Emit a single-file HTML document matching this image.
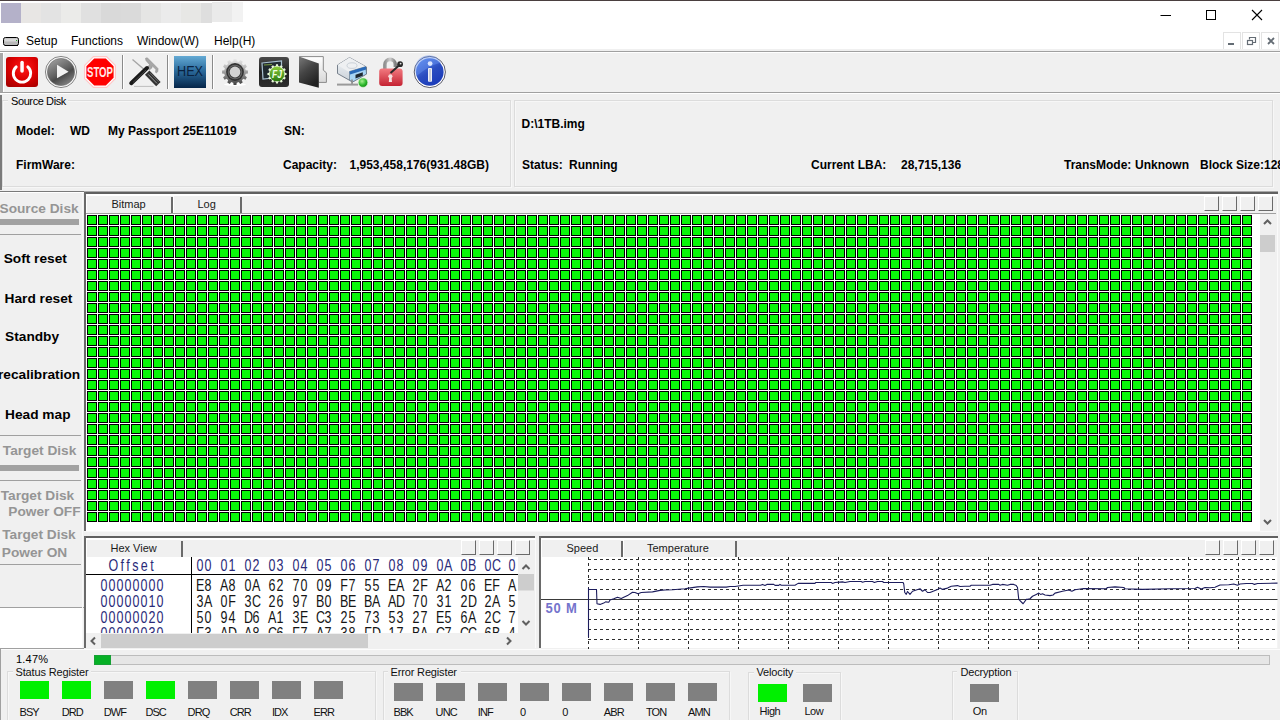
<!DOCTYPE html>
<html><head><meta charset="utf-8">
<style>
*{margin:0;padding:0;box-sizing:border-box}
html,body{width:1280px;height:720px;overflow:hidden;background:#f0f0f0;font-family:"Liberation Sans",sans-serif;color:#000}
.a{position:absolute}
.t{position:absolute;white-space:nowrap;line-height:1}
.b{font-weight:bold}
.lb{font-size:11px;letter-spacing:-0.5px;color:#111}
.hx{position:absolute;font:12.5px "Liberation Sans",sans-serif;line-height:1;white-space:nowrap;transform:scaleY(1.3);transform-origin:0 0;color:#2a2a78}
.hx span{display:inline-block;width:8px;height:13px;text-align:center;vertical-align:top}
</style></head><body>
<!-- title bar -->
<div class="a" style="left:0;top:0;width:1280px;height:51px;background:#fff"></div>
<div class="a" style="left:0;top:0;width:1280px;height:1px;background:#4a3f3f"></div>
<div class="a" style="left:1px;top:3px;width:20px;height:20px;background:#b4b1c9"></div><div class="a" style="left:21px;top:3px;width:20px;height:20px;background:#e8e6e4"></div><div class="a" style="left:41px;top:3px;width:20px;height:20px;background:#e3e3e3"></div><div class="a" style="left:61px;top:3px;width:20px;height:20px;background:#ebebe9"></div><div class="a" style="left:81px;top:3px;width:20px;height:20px;background:#e0e0e0"></div><div class="a" style="left:101px;top:3px;width:20px;height:20px;background:#d9d9d9"></div><div class="a" style="left:121px;top:3px;width:20px;height:20px;background:#dadada"></div><div class="a" style="left:141px;top:3px;width:20px;height:20px;background:#e5e5e4"></div><div class="a" style="left:161px;top:3px;width:20px;height:20px;background:#ebebeb"></div><div class="a" style="left:181px;top:3px;width:20px;height:20px;background:#e7e7e5"></div><div class="a" style="left:201px;top:3px;width:11px;height:20px;background:#dedede"></div><div class="a" style="left:212px;top:2px;width:20px;height:20px;background:#eaeaea"></div><div class="a" style="left:232px;top:2px;width:11px;height:20px;background:#f2f2f2"></div>

<!-- window controls -->
<svg class="a" style="left:1150px;top:0" width="130" height="30">
<line x1="10.5" y1="15.5" x2="21" y2="15.5" stroke="#000" stroke-width="1"/>
<rect x="56.5" y="10.5" width="9" height="9" fill="none" stroke="#000" stroke-width="1"/>
<path d="M102 10 L112 20 M112 10 L102 20" stroke="#000" stroke-width="1.1"/>
</svg>
<!-- menu -->
<svg class="a" style="left:3px;top:37px" width="17" height="10">
<rect x="0.5" y="0.5" width="15" height="8" rx="2" fill="#b8b8b8" stroke="#000" stroke-width="1"/>
<rect x="1.5" y="1.5" width="13" height="3" fill="#d8d8d8"/>
<line x1="2" y1="8.5" x2="15" y2="8.5" stroke="#000"/>
<rect x="13" y="3" width="1" height="1" fill="#3a3"/>
</svg>
<div class="t" style="left:26px;top:35px;font-size:12px">Setup</div>
<div class="t" style="left:71px;top:35px;font-size:12px">Functions</div>
<div class="t" style="left:137px;top:35px;font-size:12px">Window(W)</div>
<div class="t" style="left:214px;top:35px;font-size:12px">Help(H)</div>
<div class="a" style="left:1223px;top:32px;width:18px;height:18px;border:1px solid #e3e3e3"></div>
<div class="a" style="left:1242px;top:32px;width:18px;height:18px;border:1px solid #e3e3e3"></div>
<div class="a" style="left:1261px;top:32px;width:18px;height:18px;border:1px solid #e3e3e3"></div>
<svg class="a" style="left:1223px;top:32px" width="57" height="18">
<rect x="5" y="11" width="6" height="2" fill="#646c74"/>
<rect x="24.5" y="8.5" width="5" height="4" fill="none" stroke="#646c74" stroke-width="1.2"/>
<path d="M26.5 7.5 V5.5 H32.5 V10.5 H30" fill="none" stroke="#646c74" stroke-width="1.2"/>
<path d="M45 6 L51 12 M51 6 L45 12" stroke="#646c74" stroke-width="1.8"/>
</svg>
<div class="a" style="left:0;top:49px;width:1280px;height:2px;background:#f0f0f0"></div>
<div class="a" style="left:0;top:51px;width:1280px;height:1px;background:#a0a0a0"></div>
<div class="a" style="left:0;top:52px;width:1280px;height:1px;background:#fff"></div>

<!-- toolbar -->
<div class="a" style="left:0;top:53px;width:3px;height:39px;background:#a8a8a8"></div>
<div class="a" style="left:3px;top:53px;width:1px;height:39px;background:#fff"></div>
<svg class="a" style="left:0;top:52px" width="460" height="40">
<defs>
<radialGradient id="gPow" cx="0.55" cy="0.35" r="0.75"><stop offset="0" stop-color="#ff1a1a"/><stop offset="0.55" stop-color="#dc0000"/><stop offset="1" stop-color="#a80000"/></radialGradient>
<linearGradient id="gPlay" x1="0.2" y1="0" x2="0.8" y2="1"><stop offset="0" stop-color="#a0a0a0"/><stop offset="0.5" stop-color="#606060"/><stop offset="0.62" stop-color="#4a4a4a"/><stop offset="1" stop-color="#8a8a8a"/></linearGradient>
<linearGradient id="gHex" x1="0" y1="0" x2="0" y2="1"><stop offset="0" stop-color="#64aad4"/><stop offset="0.45" stop-color="#2c6c9e"/><stop offset="1" stop-color="#052549"/></linearGradient>
<linearGradient id="gDark" x1="0" y1="0" x2="0" y2="1"><stop offset="0" stop-color="#4a4a4a"/><stop offset="0.5" stop-color="#202020"/><stop offset="1" stop-color="#2e2e2e"/></linearGradient>
<linearGradient id="gFold" x1="0" y1="0" x2="0.5" y2="1"><stop offset="0" stop-color="#7a7a7a"/><stop offset="0.5" stop-color="#454545"/><stop offset="1" stop-color="#222"/></linearGradient>
<linearGradient id="gPage" x1="0" y1="0" x2="0" y2="1"><stop offset="0" stop-color="#ffffff"/><stop offset="1" stop-color="#d8d8d8"/></linearGradient>
<linearGradient id="gLock" x1="0" y1="0" x2="0" y2="1"><stop offset="0" stop-color="#f27a80"/><stop offset="1" stop-color="#c42232"/></linearGradient>
<linearGradient id="gShk" x1="0" y1="0" x2="1" y2="0"><stop offset="0" stop-color="#909090"/><stop offset="0.5" stop-color="#d0d0d0"/><stop offset="1" stop-color="#808080"/></linearGradient>
<linearGradient id="gInfo" x1="0.2" y1="0" x2="0.8" y2="1"><stop offset="0" stop-color="#5a88ec"/><stop offset="0.5" stop-color="#2a4cc0"/><stop offset="1" stop-color="#1838b8"/></linearGradient>
<linearGradient id="gGearT" x1="0" y1="0" x2="0" y2="1"><stop offset="0" stop-color="#e8e8e8"/><stop offset="0.45" stop-color="#a8a8a8"/><stop offset="1" stop-color="#404040"/></linearGradient>
<linearGradient id="gGreen" x1="0" y1="0" x2="0" y2="1"><stop offset="0" stop-color="#8ccc3a"/><stop offset="1" stop-color="#2a7a10"/></linearGradient>
<linearGradient id="gDrv" x1="0" y1="0" x2="0" y2="1"><stop offset="0" stop-color="#f4f6f8"/><stop offset="1" stop-color="#c8d0d8"/></linearGradient>
<radialGradient id="gBall" cx="0.4" cy="0.35" r="0.7"><stop offset="0" stop-color="#a8f090"/><stop offset="0.6" stop-color="#2cb82c"/><stop offset="1" stop-color="#108010"/></radialGradient>
</defs>
<!-- power -->
<rect x="6" y="5" width="32" height="30" rx="3" fill="url(#gPow)"/>
<path d="M16.2 14.9 A8.7 8.7 0 1 0 27.8 14.9" fill="none" stroke="#fff" stroke-width="2.9" stroke-linecap="round"/>
<rect x="20.3" y="8.7" width="3.5" height="12" rx="1.75" fill="#fff"/>
<!-- play -->
<circle cx="61" cy="20" r="15.6" fill="#f4f4f4" stroke="#7a7a7a" stroke-width="0.9"/>
<circle cx="61" cy="20" r="13.6" fill="url(#gPlay)" stroke="#6a6a6a" stroke-width="0.6"/>
<path d="M57 12.8 L68.6 19.8 L57 26.2 Z" fill="#f2f2f2"/>
<!-- stop -->
<path d="M93.2 4 L106.8 4 L116 13.2 L116 26.8 L106.8 36 L93.2 36 L84 26.8 L84 13.2 Z" fill="#ffc8c8"/>
<path d="M93.7 5.2 L106.3 5.2 L114.8 13.7 L114.8 26.3 L106.3 34.8 L93.7 34.8 L85.2 26.3 L85.2 13.7 Z" fill="#fff"/>
<path d="M94.2 6.4 L105.8 6.4 L113.6 14.2 L113.6 25.8 L105.8 33.6 L94.2 33.6 L86.4 25.8 L86.4 14.2 Z" fill="#ff0000"/>
<text x="100" y="25.4" text-anchor="middle" font-family="Liberation Sans" font-weight="bold" font-size="15.5" fill="#ffe8e8" textLength="26" lengthAdjust="spacingAndGlyphs">STOP</text>
<!-- sep -->
<rect x="122" y="3" width="1" height="34" fill="#8a8a8a"/><rect x="123" y="3" width="1" height="34" fill="#fff"/>
<!-- tools -->
<path d="M134 34.4 H153.5" stroke="#bdbdbd" stroke-width="1"/>
<path d="M132.5 7.5 L144.2 17.6" stroke="#a4a4a4" stroke-width="1.3"/>
<path d="M145.5 6.3 L147.3 5.8 L158 16.6 L157.8 19.6 L156.3 21 L155.5 20 L156 17.5 L152.2 13.8 L152 15.8 L149.5 17.8 L147.5 15.8 L149.5 12.5 L146 8.5 Z" fill="#a8a8a8" stroke="#8e8e8e" stroke-width="0.6"/>
<path d="M147.2 20.6 L158.4 32.2" stroke="#333" stroke-width="6.2"/>
<path d="M148.2 22.4 L157 31.4" stroke="#9a9a9a" stroke-width="1"/>
<path d="M150.2 21.2 L158.6 29.8" stroke="#6a6a6a" stroke-width="0.9"/>
<path d="M131.2 31.2 L147 16" stroke="#1a1a1a" stroke-width="4" stroke-linecap="round"/>
<path d="M133 30.4 L146 18" stroke="#4a4a4a" stroke-width="0.9"/>
<!-- sep -->
<rect x="167" y="3" width="1" height="34" fill="#8a8a8a"/><rect x="168" y="3" width="1" height="34" fill="#fff"/>
<!-- hex -->
<rect x="174" y="4" width="32" height="32" fill="url(#gHex)"/>
<text x="190" y="23.8" text-anchor="middle" font-family="Liberation Sans" font-size="14" fill="#0a2240" textLength="26" lengthAdjust="spacingAndGlyphs">HEX</text>
<!-- sep -->
<rect x="212" y="3" width="1" height="34" fill="#8a8a8a"/><rect x="213" y="3" width="1" height="34" fill="#fff"/>
<!-- gear -->
<ellipse cx="235" cy="32.5" rx="11" ry="1.5" fill="#fff"/>
<path d="M233.25 9.34 L233.57 7.08 L236.43 7.08 L236.75 9.34 L238.82 9.90 L240.23 8.10 L242.70 9.52 L241.84 11.64 L243.36 13.16 L245.48 12.30 L246.90 14.77 L245.10 16.18 L245.66 18.25 L247.92 18.57 L247.92 21.43 L245.66 21.75 L245.10 23.82 L246.90 25.23 L245.48 27.70 L243.36 26.84 L241.84 28.36 L242.70 30.48 L240.23 31.90 L238.82 30.10 L236.75 30.66 L236.43 32.92 L233.57 32.92 L233.25 30.66 L231.18 30.10 L229.77 31.90 L227.30 30.48 L228.16 28.36 L226.64 26.84 L224.52 27.70 L223.10 25.23 L224.90 23.82 L224.34 21.75 L222.08 21.43 L222.08 18.57 L224.34 18.25 L224.90 16.18 L223.10 14.77 L224.52 12.30 L226.64 13.16 L228.16 11.64 L227.30 9.52 L229.77 8.10 L231.18 9.90 Z" fill="url(#gGearT)"/>
<circle cx="235" cy="20" r="8.9" fill="#333"/>
<circle cx="235" cy="20" r="7.3" fill="#6a6a6a"/>
<circle cx="235" cy="20" r="6.3" fill="#3e3e3e"/>
<circle cx="235" cy="20" r="5.4" fill="#d2d2d2"/>
<!-- dark window -->
<rect x="259" y="5" width="30" height="30" rx="3" fill="url(#gDark)"/>
<path d="M262 11 L281.5 9 L281.5 25 L263 27 Z" fill="#202a30" stroke="#a8c0d0" stroke-width="1.2"/>
<path d="M264 13 L272 12.5" stroke="#7a9a40" stroke-width="1"/>
<path d="M275.75 14.00 L276.00 12.35 L278.00 12.35 L278.25 14.00 L279.87 14.43 L280.90 13.13 L282.64 14.13 L282.03 15.68 L283.22 16.87 L284.77 16.26 L285.77 18.00 L284.47 19.03 L284.90 20.65 L286.55 20.90 L286.55 22.90 L284.90 23.15 L284.47 24.77 L285.77 25.80 L284.77 27.54 L283.22 26.93 L282.03 28.12 L282.64 29.67 L280.90 30.67 L279.87 29.37 L278.25 29.80 L278.00 31.45 L276.00 31.45 L275.75 29.80 L274.13 29.37 L273.10 30.67 L271.36 29.67 L271.97 28.12 L270.78 26.93 L269.23 27.54 L268.23 25.80 L269.53 24.77 L269.10 23.15 L267.45 22.90 L267.45 20.90 L269.10 20.65 L269.53 19.03 L268.23 18.00 L269.23 16.26 L270.78 16.87 L271.97 15.68 L271.36 14.13 L273.10 13.13 L274.13 14.43 Z" fill="#e8f8d8"/>
<circle cx="277" cy="21.9" r="7.4" fill="url(#gGreen)"/>
<text x="277" y="26.2" text-anchor="middle" font-family="Liberation Sans" font-weight="bold" font-style="italic" font-size="11" fill="#f0ffe0" textLength="10" lengthAdjust="spacingAndGlyphs">FJ</text>
<!-- folder -->
<path d="M299.5 4.6 L323.3 4.6 L323.3 18.2 L326.4 20.8 L326.4 30.4 L318.8 30.4 Z" fill="url(#gPage)" stroke="#8a8a8a" stroke-width="1"/>
<path d="M299 4.6 L318.8 11.4 L318.8 35.8 L299 30.6 Z" fill="url(#gFold)"/>
<!-- drive -->
<path d="M337.5 13 L349.5 5.6 L366.5 15 L366.5 22 L352.5 30 L337.5 21.5 Z" fill="url(#gDrv)" stroke="#6a7480" stroke-width="0.9"/>
<path d="M337.5 13 L349.5 5.6 L366.5 15 L353 22.5 Z" fill="#eef0f2"/>
<ellipse cx="352" cy="13.6" rx="5" ry="2.8" fill="none" stroke="#c0c8d0" stroke-width="0.8"/>
<path d="M349.5 19.5 L365.8 14.6 L366.5 22 L352.5 30 L349.5 28 Z" fill="#a8d4f4" stroke="#5a6a7a" stroke-width="0.6"/>
<path d="M349.5 19.5 L365.8 14.6 L366.2 17.5 L350 22.5 Z" fill="#2a6ab8"/>
<path d="M355.5 22.8 L362.8 20.2 L362.8 23.8 L355.5 26.4 Z" fill="#202830"/>
<path d="M352 27.5 V32.5" stroke="#8a8a8a" stroke-width="1.6"/>
<path d="M337 32.6 H358" stroke="#9a9a9a" stroke-width="2"/>
<circle cx="363" cy="30.6" r="4.7" fill="url(#gBall)" stroke="#d8f4d0" stroke-width="0.6"/>
<!-- lock -->
<path d="M384.9 17 V12.6 A5.2 5.2 0 0 1 395.3 12.6 V15" fill="none" stroke="url(#gShk)" stroke-width="3.6"/>
<rect x="379.2" y="16.6" width="23.4" height="17.4" rx="3" fill="url(#gLock)"/>
<circle cx="390.4" cy="24.3" r="2.1" fill="#f8e0e0"/>
<path d="M389.3 24.5 L391.5 24.5 L392 30 L388.8 30 Z" fill="#f8e0e0"/>
<path d="M390.5 21 L399.5 13" stroke="#2a2a2a" stroke-width="2"/>
<circle cx="400.1" cy="12.2" r="2.9" fill="#2a2a2a"/>
<circle cx="400.6" cy="11.6" r="0.9" fill="#e0e0e0"/>
<!-- info -->
<circle cx="429.8" cy="20" r="15.6" fill="#fff" stroke="#4a4a5a" stroke-width="0.9"/>
<circle cx="429.8" cy="20" r="13.8" fill="url(#gInfo)"/>
<path d="M416.6 24 A13.8 13.8 0 0 1 441 10.5 Q428 14 416.6 24 Z" fill="#6a94f0" opacity="0.45"/>
<circle cx="430.1" cy="11.6" r="2.4" fill="#dce6ff"/>
<rect x="428" y="16" width="4" height="13.8" rx="0.8" fill="#eef0f8"/>
<rect x="429.4" y="17" width="1.2" height="12" fill="#b0b4c0"/>
</svg>
<div class="a" style="left:0;top:92px;width:1280px;height:1px;background:#a0a0a0"></div>

<!-- source disk panel -->
<div class="a" style="left:0;top:93px;width:1280px;height:1px;background:#fff"></div>
<div class="a" style="left:0;top:95px;width:2px;height:95px;background:#7a7a7a"></div>
<div class="a" style="left:2px;top:100px;width:509px;height:87px;border:1px solid #dcdcdc;box-shadow:inset 1px 1px #f7f7f7,1px 1px #f7f7f7"></div>
<div class="a" style="left:8px;top:96px;width:60px;height:8px;background:#f0f0f0"></div>
<div class="t" style="left:11px;top:95.5px;font-size:11px;letter-spacing:-0.4px">Source Disk</div>
<div class="a" style="left:514px;top:100px;width:759px;height:87px;border:1px solid #dcdcdc;box-shadow:inset 1px 1px #f7f7f7,1px 1px #f7f7f7"></div>
<div class="t b" style="left:16px;top:124.5px;font-size:12px">Model:</div>
<div class="t b" style="left:70px;top:124.5px;font-size:12px">WD</div>
<div class="t b" style="left:108px;top:124.5px;font-size:12px">My Passport 25E11019</div>
<div class="t b" style="left:284px;top:124.5px;font-size:12px">SN:</div>
<div class="t b" style="left:16px;top:158.5px;font-size:12px">FirmWare:</div>
<div class="t b" style="left:283px;top:158.5px;font-size:12px">Capacity:</div>
<div class="t b" style="left:349.5px;top:158.5px;font-size:12px">1,953,458,176(931.48GB)</div>
<div class="t b" style="left:521.5px;top:118px;font-size:12px">D:\1TB.img</div>
<div class="t b" style="left:522px;top:158.5px;font-size:12px">Status:</div>
<div class="t b" style="left:569px;top:158.5px;font-size:12px">Running</div>
<div class="t b" style="left:811px;top:158.5px;font-size:12px">Current LBA:</div>
<div class="t b" style="left:901px;top:158.5px;font-size:12px">28,715,136</div>
<div class="t b" style="left:1064px;top:158.5px;font-size:12px">TransMode:</div>
<div class="t b" style="left:1135px;top:158.5px;font-size:12px">Unknown</div>
<div class="t b" style="left:1200px;top:158.5px;font-size:12px">Block Size:128</div>
<div class="a" style="left:0;top:191px;width:84px;height:1px;background:#7a7a7a"></div>
<div class="a" style="left:0;top:192px;width:84px;height:1px;background:#fff"></div>

<!-- sidebar -->
<div class="t b" style="left:-0.5px;top:201.8px;font-size:13.7px;color:#959595">Source Disk</div>
<div class="a" style="left:0;top:219px;width:79px;height:6px;background:#a2a2a2"></div>
<div class="a" style="left:0;top:234px;width:81px;height:1px;background:#a0a0a0"></div>
<div class="t b" style="left:3.7px;top:251.9px;font-size:13.7px">Soft reset</div>
<div class="t b" style="left:4.6px;top:292.1px;font-size:13.7px">Hard reset</div>
<div class="t b" style="left:5.1px;top:329.7px;font-size:13.7px">Standby</div>
<div class="t b" style="left:-2px;top:367.9px;font-size:13.7px">recalibration</div>
<div class="t b" style="left:5.1px;top:407.6px;font-size:13.7px">Head map</div>
<div class="a" style="left:0;top:435px;width:81px;height:1px;background:#a0a0a0"></div>
<div class="t b" style="left:2.8px;top:444.1px;font-size:13.7px;color:#959595">Target Disk</div>
<div class="t b" style="left:0.7px;top:489.1px;font-size:13.7px;color:#959595">Target Disk</div>
<div class="t b" style="left:8.3px;top:505.1px;font-size:13.7px;color:#959595">Power OFF</div>
<div class="t b" style="left:2.2px;top:528.1px;font-size:13.7px;color:#959595">Target Disk</div>
<div class="t b" style="left:1.8px;top:546.1px;font-size:13.7px;color:#959595">Power ON</div>
<div class="a" style="left:0;top:465px;width:79px;height:6px;background:#a2a2a2"></div>
<div class="a" style="left:0;top:480px;width:81px;height:1px;background:#a0a0a0"></div>
<div class="a" style="left:0;top:564px;width:81px;height:1px;background:#a0a0a0"></div>
<div class="a" style="left:0;top:607px;width:84px;height:1px;background:#a0a0a0"></div>
<div class="a" style="left:0;top:608px;width:83px;height:40px;background:#fff"></div>
<div class="a" style="left:0;top:648px;width:84px;height:1px;background:#a0a0a0"></div>

<!-- bitmap panel -->
<div class="a" style="left:84px;top:191px;width:1194px;height:1px;background:#a8a8a8"></div>
<div class="a" style="left:84px;top:192px;width:1194px;height:2px;background:#606060"></div>
<div class="a" style="left:84px;top:192px;width:2px;height:339px;background:#6a6a6a"></div>
<div class="a" style="left:86px;top:194px;width:1191px;height:2px;background:#fff"></div>
<div class="a" style="left:86px;top:214px;width:1174px;height:317px;background:#fff"></div>
<div class="a" style="left:86px;top:213px;width:1190px;height:1px;background:#a0a0a0"></div>
<div class="a" style="left:1277px;top:194px;width:1px;height:337px;background:#fafafa"></div>
<div class="a" style="left:86px;top:196px;width:1px;height:17px;background:#fff"></div>
<div class="a" style="left:171px;top:197px;width:2px;height:16px;background:#6a6a6a"></div>
<div class="a" style="left:173px;top:196px;width:1px;height:17px;background:#fff"></div>
<div class="a" style="left:240px;top:197px;width:2px;height:16px;background:#6a6a6a"></div>
<div class="t" style="left:111.5px;top:199.4px;font-size:11px;color:#1a1a1a">Bitmap</div>
<div class="t" style="left:197.5px;top:199.4px;font-size:11px;color:#1a1a1a">Log</div>
<div class="a" style="left:1204px;top:196px;width:15px;height:15px;border-top:1px solid #fff;border-left:1px solid #fff;border-right:1px solid #6a6a6a;border-bottom:1px solid #6a6a6a"></div>
<div class="a" style="left:1222px;top:196px;width:15px;height:15px;border-top:1px solid #fff;border-left:1px solid #fff;border-right:1px solid #6a6a6a;border-bottom:1px solid #6a6a6a"></div>
<div class="a" style="left:1240px;top:196px;width:15px;height:15px;border-top:1px solid #fff;border-left:1px solid #fff;border-right:1px solid #6a6a6a;border-bottom:1px solid #6a6a6a"></div>
<div class="a" style="left:1258px;top:196px;width:15px;height:15px;border-top:1px solid #fff;border-left:1px solid #fff;border-right:1px solid #6a6a6a;border-bottom:1px solid #6a6a6a"></div>
<svg class="a" style="left:87px;top:215px" width="1165" height="307">
<defs><pattern id="cell" width="11" height="11" patternUnits="userSpaceOnUse"><rect width="10" height="10" fill="#000"/><rect x="1" y="1" width="8" height="8" fill="#08f808"/></pattern></defs>
<rect width="1165" height="307" fill="url(#cell)"/>
</svg>
<div class="a" style="left:1260px;top:214px;width:15px;height:316px;background:#f0f0f0"></div>
<svg class="a" style="left:1260px;top:214px" width="15" height="316">
<path d="M4 10 L7.5 6.5 L11 10" fill="none" stroke="#606060" stroke-width="2"/>
<rect x="0" y="21" width="15" height="17" fill="#cdcdcd"/>
<path d="M4 306 L7.5 309.5 L11 306" fill="none" stroke="#606060" stroke-width="2"/>
</svg>

<!-- hex panel -->
<div class="a" style="left:82px;top:193px;width:1px;height:455px;background:#f8f8f8"></div>
<div class="a" style="left:84px;top:531px;width:1194px;height:1px;background:#f8f8f8"></div>
<div class="a" style="left:84px;top:536px;width:451px;height:2px;background:#606060"></div>
<div class="a" style="left:84px;top:536px;width:2px;height:112px;background:#6a6a6a"></div>
<div class="a" style="left:86px;top:538px;width:449px;height:2px;background:#fff"></div>
<div class="a" style="left:535px;top:538px;width:1px;height:110px;background:#fafafa"></div>
<div class="a" style="left:86px;top:540px;width:1px;height:17px;background:#fff"></div>
<div class="a" style="left:181px;top:541px;width:2px;height:16px;background:#6a6a6a"></div>
<div class="t" style="left:110.5px;top:543.4px;font-size:11px;color:#1a1a1a">Hex View</div>
<div class="a" style="left:461px;top:540px;width:15px;height:15px;border-top:1px solid #fff;border-left:1px solid #fff;border-right:1px solid #6a6a6a;border-bottom:1px solid #6a6a6a"></div>
<div class="a" style="left:479px;top:540px;width:15px;height:15px;border-top:1px solid #fff;border-left:1px solid #fff;border-right:1px solid #6a6a6a;border-bottom:1px solid #6a6a6a"></div>
<div class="a" style="left:497px;top:540px;width:15px;height:15px;border-top:1px solid #fff;border-left:1px solid #fff;border-right:1px solid #6a6a6a;border-bottom:1px solid #6a6a6a"></div>
<div class="a" style="left:515px;top:540px;width:15px;height:15px;border-top:1px solid #fff;border-left:1px solid #fff;border-right:1px solid #6a6a6a;border-bottom:1px solid #6a6a6a"></div>
<div class="a" style="left:86px;top:557px;width:432px;height:76px;background:#fff;overflow:hidden">
<div class="a" style="left:0;top:17px;width:432px;height:1px;background:#000"></div>
<div class="a" style="left:105px;top:0;width:1px;height:76px;background:#000"></div>
<div class="hx" style="left:22.5px;top:1px;letter-spacing:2.4px">Offset</div>
<div class="hx" style="left:110px;top:1px"><span>0</span><span>0</span><span></span><span>0</span><span>1</span><span></span><span>0</span><span>2</span><span></span><span>0</span><span>3</span><span></span><span>0</span><span>4</span><span></span><span>0</span><span>5</span><span></span><span>0</span><span>6</span><span></span><span>0</span><span>7</span><span></span><span>0</span><span>8</span><span></span><span>0</span><span>9</span><span></span><span>0</span><span>A</span><span></span><span>0</span><span>B</span><span></span><span>0</span><span>C</span><span></span><span>0</span></div>
<div class="hx" style="left:14px;top:21px"><span>0</span><span>0</span><span>0</span><span>0</span><span>0</span><span>0</span><span>0</span><span>0</span></div>
<div class="hx" style="left:14px;top:37px"><span>0</span><span>0</span><span>0</span><span>0</span><span>0</span><span>0</span><span>1</span><span>0</span></div>
<div class="hx" style="left:14px;top:53px"><span>0</span><span>0</span><span>0</span><span>0</span><span>0</span><span>0</span><span>2</span><span>0</span></div>
<div class="hx" style="left:14px;top:69px"><span>0</span><span>0</span><span>0</span><span>0</span><span>0</span><span>0</span><span>3</span><span>0</span></div>
<div class="hx" style="left:110px;top:21px;color:#151515"><span>E</span><span>8</span><span></span><span>A</span><span>8</span><span></span><span>0</span><span>A</span><span></span><span>6</span><span>2</span><span></span><span>7</span><span>0</span><span></span><span>0</span><span>9</span><span></span><span>F</span><span>7</span><span></span><span>5</span><span>5</span><span></span><span>E</span><span>A</span><span></span><span>2</span><span>F</span><span></span><span>A</span><span>2</span><span></span><span>0</span><span>6</span><span></span><span>E</span><span>F</span><span></span><span>A</span></div>
<div class="hx" style="left:110px;top:37px;color:#151515"><span>3</span><span>A</span><span></span><span>0</span><span>F</span><span></span><span>3</span><span>C</span><span></span><span>2</span><span>6</span><span></span><span>9</span><span>7</span><span></span><span>B</span><span>0</span><span></span><span>B</span><span>E</span><span></span><span>B</span><span>A</span><span></span><span>A</span><span>D</span><span></span><span>7</span><span>0</span><span></span><span>3</span><span>1</span><span></span><span>2</span><span>D</span><span></span><span>2</span><span>A</span><span></span><span>5</span></div>
<div class="hx" style="left:110px;top:53px;color:#151515"><span>5</span><span>0</span><span></span><span>9</span><span>4</span><span></span><span>D</span><span>6</span><span></span><span>A</span><span>1</span><span></span><span>3</span><span>E</span><span></span><span>C</span><span>3</span><span></span><span>2</span><span>5</span><span></span><span>7</span><span>3</span><span></span><span>5</span><span>3</span><span></span><span>2</span><span>7</span><span></span><span>E</span><span>5</span><span></span><span>6</span><span>A</span><span></span><span>2</span><span>C</span><span></span><span>7</span></div>
<div class="hx" style="left:110px;top:69px;color:#151515"><span>F</span><span>3</span><span></span><span>A</span><span>D</span><span></span><span>A</span><span>8</span><span></span><span>C</span><span>6</span><span></span><span>F</span><span>7</span><span></span><span>A</span><span>7</span><span></span><span>3</span><span>8</span><span></span><span>F</span><span>D</span><span></span><span>1</span><span>7</span><span></span><span>B</span><span>A</span><span></span><span>C</span><span>7</span><span></span><span>C</span><span>C</span><span></span><span>6</span><span>B</span><span></span><span>4</span></div>
</div>
<div class="a" style="left:518px;top:557px;width:17px;height:76px;background:#f0f0f0"></div>
<svg class="a" style="left:518px;top:557px" width="16" height="76">
<path d="M4.5 12 L8 8.5 L11.5 12" fill="none" stroke="#606060" stroke-width="2"/>
<rect x="0" y="17" width="16" height="16.5" fill="#cdcdcd"/>
<path d="M4.5 64 L8 67.5 L11.5 64" fill="none" stroke="#606060" stroke-width="2"/>
</svg>
<div class="a" style="left:86px;top:633px;width:449px;height:15px;background:#f0f0f0"></div>
<div class="a" style="left:101px;top:634px;width:267px;height:14px;background:#cdcdcd"></div>
<svg class="a" style="left:86px;top:633px" width="448" height="15">
<path d="M9 4.5 L5.5 8 L9 11.5" fill="none" stroke="#606060" stroke-width="2"/>
<path d="M421 4.5 L424.5 8 L421 11.5" fill="none" stroke="#606060" stroke-width="2"/>
</svg>

<!-- speed panel -->
<div class="a" style="left:539px;top:536px;width:739px;height:2px;background:#606060"></div>
<div class="a" style="left:539px;top:536px;width:2px;height:112px;background:#6a6a6a"></div>
<div class="a" style="left:541px;top:538px;width:736px;height:2px;background:#fff"></div>
<div class="a" style="left:541px;top:540px;width:1px;height:17px;background:#fff"></div>
<div class="a" style="left:621px;top:541px;width:2px;height:16px;background:#6a6a6a"></div>
<div class="a" style="left:623px;top:540px;width:1px;height:17px;background:#fff"></div>
<div class="a" style="left:735px;top:541px;width:2px;height:16px;background:#6a6a6a"></div>
<div class="t" style="left:566.5px;top:543.4px;font-size:11px;color:#1a1a1a">Speed</div>
<div class="t" style="left:647px;top:543.4px;font-size:11px;color:#1a1a1a">Temperature</div>
<div class="a" style="left:1205px;top:540px;width:15px;height:15px;border-top:1px solid #fff;border-left:1px solid #fff;border-right:1px solid #6a6a6a;border-bottom:1px solid #6a6a6a"></div>
<div class="a" style="left:1223px;top:540px;width:15px;height:15px;border-top:1px solid #fff;border-left:1px solid #fff;border-right:1px solid #6a6a6a;border-bottom:1px solid #6a6a6a"></div>
<div class="a" style="left:1241px;top:540px;width:15px;height:15px;border-top:1px solid #fff;border-left:1px solid #fff;border-right:1px solid #6a6a6a;border-bottom:1px solid #6a6a6a"></div>
<div class="a" style="left:1259px;top:540px;width:15px;height:15px;border-top:1px solid #fff;border-left:1px solid #fff;border-right:1px solid #6a6a6a;border-bottom:1px solid #6a6a6a"></div>
<div class="a" style="left:541px;top:557px;width:737px;height:91px;background:#fff"></div>
<div class="a" style="left:1277px;top:538px;width:1px;height:110px;background:#f4f4f4"></div>
<div class="t b" style="left:545.5px;top:601px;font-size:13px;letter-spacing:0.8px;color:#7474cc;transform:scaleY(1.08);transform-origin:0 0">50 M</div>
<svg class="a" style="left:540px;top:536px" width="740" height="113">
<g stroke="#2c2c2c" stroke-width="1" stroke-dasharray="3 3" fill="none"><line x1="48.5" y1="21" x2="48.5" y2="113"/><line x1="98.5" y1="21" x2="98.5" y2="113"/><line x1="148.5" y1="21" x2="148.5" y2="113"/><line x1="198.5" y1="21" x2="198.5" y2="113"/><line x1="248.5" y1="21" x2="248.5" y2="113"/><line x1="298.5" y1="21" x2="298.5" y2="113"/><line x1="348.5" y1="21" x2="348.5" y2="113"/><line x1="398.5" y1="21" x2="398.5" y2="113"/><line x1="448.5" y1="21" x2="448.5" y2="113"/><line x1="498.5" y1="21" x2="498.5" y2="113"/><line x1="548.5" y1="21" x2="548.5" y2="113"/><line x1="598.5" y1="21" x2="598.5" y2="113"/><line x1="648.5" y1="21" x2="648.5" y2="113"/><line x1="698.5" y1="21" x2="698.5" y2="113"/><line x1="48" y1="23.5" x2="736" y2="23.5"/><line x1="48" y1="33.5" x2="736" y2="33.5"/><line x1="48" y1="43.5" x2="736" y2="43.5"/><line x1="48" y1="53.5" x2="736" y2="53.5"/><line x1="48" y1="73.5" x2="736" y2="73.5"/><line x1="48" y1="83.5" x2="736" y2="83.5"/><line x1="48" y1="93.5" x2="736" y2="93.5"/><line x1="48" y1="103.5" x2="736" y2="103.5"/><line x1="48" y1="113.5" x2="736" y2="113.5"/></g>
<line x1="1" y1="63.5" x2="737.5" y2="63.5" stroke="#3a3a3a" stroke-width="1"/>
<path d="M48.5 101.5 L48.5 52 L48.5 53.5 L56.5 53.5 L57 67.75 L60 68.4 L63.75 67.1 L65.6 65.9 L68.75 66.25 L70 64 L73.75 62.75 L77.5 61.25 L81.25 62.5 L83.75 61.25 L87.5 59.6 L92.5 56.25 L95 56.5 L98 57.75 L101.25 56.5 L112.5 55.9 L120 54.4 L125 54 L132.5 53.75 L145 52.75 L148.75 52.1 L157.5 50.9 L163.75 50.5 L170 51.1 L186.25 51.1 L190 50.5 L195 50.5 L203.1 49.25 L220.6 49.25 L222.5 48.4 L225 49.4 L226.9 48.4 L233.75 48.4 L235 49.4 L238.75 49.4 L240 48.4 L241.25 49.25 L255 49.25 L258.1 47.4 L275 47.4 L275.6 46.5 L291.25 46.5 L292.5 47.4 L295 46.5 L302.5 45.9 L305 46.5 L310 45.5 L321.25 45.5 L322.5 46.25 L325 45.5 L332.5 45.5 L334.4 46.5 L337.5 45.5 L342.5 45.5 L343.75 46.5 L363.1 46.5 L363.75 48 L364.75 56.5 L366.25 58.4 L367.5 55.5 L370 58.4 L372.5 55.25 L380 52.75 L382.5 55.25 L385 53.75 L387.5 56.5 L390 56.5 L397.5 53.4 L400 52.1 L402.5 53.4 L407.5 52.1 L411.25 50.25 L417.5 49.6 L420 50.5 L425 50.25 L430 50.25 L431.25 49.25 L450 49.25 L452.5 48.4 L458.75 48.4 L460 49.25 L462.5 48.4 L467.5 49.25 L470 48.4 L473.75 48.4 L476.25 49.6 L477.5 51.5 L478.75 63.4 L483.1 67.75 L486.25 63.4 L487.5 63.4 L490 62.75 L492.5 60.25 L496.25 58.4 L498.75 57.1 L500.6 58.4 L502.5 57.75 L505 59 L510 59.6 L513.1 59 L515 57.1 L522.5 55.25 L528.75 54 L531.9 55.25 L535 53.75 L543.75 52.5 L566.25 52.75 L567.5 51.5 L575 50.9 L583.75 51.5 L585 52.75 L602.5 53.4 L630 52.75 L655 52.5 L657.5 51.25 L661.25 53.1 L665 51.5 L670 51.75 L675 51.25 L680 49 L688.75 48.75 L693.75 48 L697.5 49.25 L700 48 L706.25 47.5 L712.5 47.5 L714.4 48.4 L717.5 47.5 L720 47.5 L737.5 47.1" fill="none" stroke="#1c1c5c" stroke-width="1.1" stroke-linejoin="round"/>
</svg>

<!-- status area -->
<div class="a" style="left:0;top:649px;width:1280px;height:1px;background:#fcfcfc"></div>
<div class="a" style="left:0;top:649px;width:1px;height:71px;background:#a0a0a0"></div>
<div class="t" style="left:16px;top:653.6px;font-size:11px;letter-spacing:0.2px">1.47%</div>
<div class="a" style="left:94px;top:655px;width:1176px;height:10px;background:#e6e6e6;border:1px solid #bcbcbc"></div>
<div class="a" style="left:94px;top:655px;width:17px;height:10px;background:#06b025;border:1px solid #17a035"></div>
<div class="a" style="left:7px;top:671px;width:369px;height:60px;border:1px solid #dcdcdc;box-shadow:inset 1px 1px #f7f7f7,1px 1px #f7f7f7"></div>
<div class="a" style="left:12.5px;top:669px;width:78px;height:5px;background:#f0f0f0"></div>
<div class="t lb" style="left:15.5px;top:667.29px;letter-spacing:-0.15px">Status Register</div>
<div class="a" style="left:383px;top:671px;width:347px;height:60px;border:1px solid #dcdcdc;box-shadow:inset 1px 1px #f7f7f7,1px 1px #f7f7f7"></div>
<div class="a" style="left:387.5px;top:669px;width:73px;height:5px;background:#f0f0f0"></div>
<div class="t lb" style="left:390.5px;top:666.69px;letter-spacing:-0.15px">Error Register</div>
<div class="a" style="left:748px;top:672px;width:93px;height:60px;border:1px solid #dcdcdc;box-shadow:inset 1px 1px #f7f7f7,1px 1px #f7f7f7"></div>
<div class="a" style="left:753.5px;top:670px;width:42px;height:5px;background:#f0f0f0"></div>
<div class="t lb" style="left:756.5px;top:667.29px;letter-spacing:-0.15px">Velocity</div>
<div class="a" style="left:952px;top:671px;width:66px;height:60px;border:1px solid #dcdcdc;box-shadow:inset 1px 1px #f7f7f7,1px 1px #f7f7f7"></div>
<div class="a" style="left:957.4px;top:669px;width:57px;height:5px;background:#f0f0f0"></div>
<div class="t lb" style="left:960.4px;top:667.49px;letter-spacing:-0.15px">Decryption</div>
<div class="a" style="left:20px;top:681px;width:29px;height:18px;background:#00f000"></div><div class="t lb" style="left:19.5px;top:707.49px;letter-spacing:-0.9px">BSY</div>
<div class="a" style="left:62px;top:681px;width:29px;height:18px;background:#00f000"></div><div class="t lb" style="left:61.7px;top:707.49px;letter-spacing:-0.9px">DRD</div>
<div class="a" style="left:104px;top:681px;width:29px;height:18px;background:#808080"></div><div class="t lb" style="left:103.7px;top:707.49px;letter-spacing:-0.9px">DWF</div>
<div class="a" style="left:146px;top:681px;width:29px;height:18px;background:#00f000"></div><div class="t lb" style="left:145.4px;top:707.49px;letter-spacing:-0.9px">DSC</div>
<div class="a" style="left:188px;top:681px;width:29px;height:18px;background:#808080"></div><div class="t lb" style="left:187.6px;top:707.49px;letter-spacing:-0.9px">DRQ</div>
<div class="a" style="left:230px;top:681px;width:29px;height:18px;background:#808080"></div><div class="t lb" style="left:229.7px;top:707.49px;letter-spacing:-0.9px">CRR</div>
<div class="a" style="left:272px;top:681px;width:29px;height:18px;background:#808080"></div><div class="t lb" style="left:271.9px;top:707.49px;letter-spacing:-0.9px">IDX</div>
<div class="a" style="left:314px;top:681px;width:29px;height:18px;background:#808080"></div><div class="t lb" style="left:313.5px;top:707.49px;letter-spacing:-0.9px">ERR</div>
<div class="a" style="left:394px;top:683px;width:29px;height:18px;background:#808080"></div><div class="t lb" style="left:393.5px;top:707.49px;letter-spacing:-0.9px">BBK</div>
<div class="a" style="left:436px;top:683px;width:29px;height:18px;background:#808080"></div><div class="t lb" style="left:435.6px;top:707.49px;letter-spacing:-0.9px">UNC</div>
<div class="a" style="left:478px;top:683px;width:29px;height:18px;background:#808080"></div><div class="t lb" style="left:477.8px;top:707.49px;letter-spacing:-0.9px">INF</div>
<div class="a" style="left:520px;top:683px;width:29px;height:18px;background:#808080"></div><div class="t lb" style="left:520px;top:707.49px;letter-spacing:-0.9px">0</div>
<div class="a" style="left:562px;top:683px;width:29px;height:18px;background:#808080"></div><div class="t lb" style="left:562.2px;top:707.49px;letter-spacing:-0.9px">0</div>
<div class="a" style="left:604px;top:683px;width:29px;height:18px;background:#808080"></div><div class="t lb" style="left:603.8px;top:707.49px;letter-spacing:-0.9px">ABR</div>
<div class="a" style="left:646px;top:683px;width:29px;height:18px;background:#808080"></div><div class="t lb" style="left:646px;top:707.49px;letter-spacing:-0.9px">TON</div>
<div class="a" style="left:688px;top:683px;width:29px;height:18px;background:#808080"></div><div class="t lb" style="left:688px;top:707.49px;letter-spacing:-0.9px">AMN</div>
<div class="a" style="left:758px;top:684px;width:29px;height:18px;background:#00f000"></div><div class="t lb" style="left:759.5px;top:705.69px;letter-spacing:-0.5px">High</div>
<div class="a" style="left:803px;top:684px;width:29px;height:18px;background:#808080"></div><div class="t lb" style="left:804.5px;top:705.69px;letter-spacing:-0.5px">Low</div>
<div class="a" style="left:970px;top:684px;width:29px;height:18px;background:#808080"></div><div class="t lb" style="left:972.8px;top:705.89px;letter-spacing:-0.3px">On</div>

</body></html>
